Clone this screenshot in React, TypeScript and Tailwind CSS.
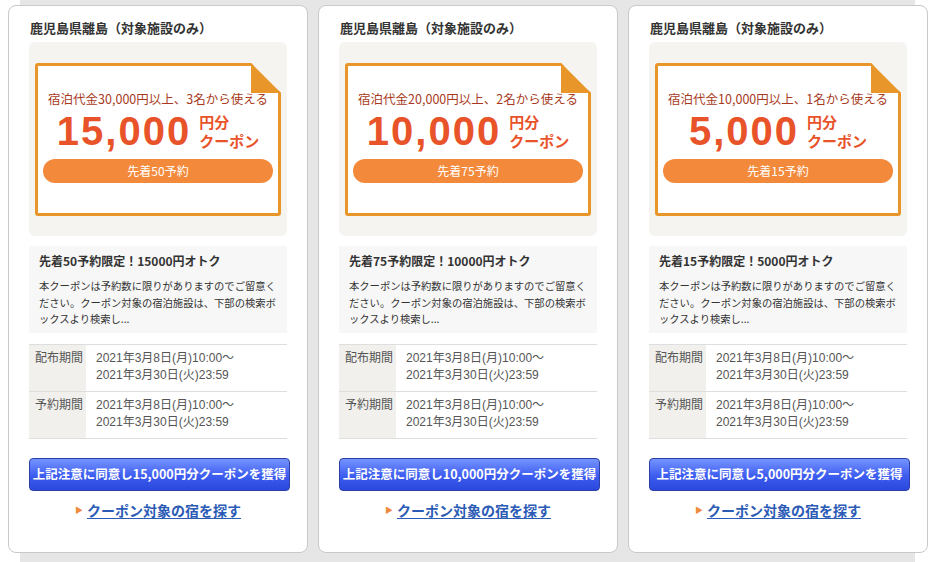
const coupons = [
  { min: "30,000", people: "3", amount: "15,000", first: "50", deal: "15000" },
  { min: "20,000", people: "2", amount: "10,000", first: "75", deal: "10000" },
  { min: "10,000", people: "1", amount: "5,000", first: "15", deal: "5000" },
];

const jp = "font-['Noto_Sans_CJK_JP','Noto_Sans',sans-serif]";

function Period({ label, last }: { label: string; last?: boolean }) {
  return (
    <div className={`flex border-t border-[#dedede] ${last ? "border-b" : ""}`}>
      <div className="w-[57px] shrink-0 bg-[#f1f0ec] pl-[6px] pt-[5px] text-[12px] leading-[17px] text-[#555]">
        {label}
      </div>
      <div className="h-[46px] pl-[10px] pt-[5px] text-[12px] leading-[17px] text-[#555]">
        <div>2021年3月8日(月)10:00〜</div>
        <div>2021年3月30日(火)23:59</div>
      </div>
    </div>
  );
}

function Card({ c }: { c: (typeof coupons)[number] }) {
  return (
    <div className="flex h-[548px] w-[300px] shrink-0 flex-col rounded-lg border border-[#c9c9c9] bg-white px-[20px] pt-[14px]">
      <h3 className="pl-[1px] text-[13px] font-bold leading-[16px] text-[#333]">鹿児島県離島（対象施設のみ）</h3>

      {/* coupon */}
      <div className="mt-[6px] rounded-md bg-[#f5f4f0] px-[6px] pb-[20px] pt-[21px]">
        <div className="relative flex h-[153px] flex-col items-center rounded-[3px] border-[3px] border-[#e8962a] bg-white pt-[25px]">
          <svg className="absolute -right-[3px] -top-[3px]" width="30" height="30" viewBox="0 0 30 30">
            <polygon points="0,0 30,0 30,30" fill="#f5f4f0" />
            <polygon points="0,0 30,30 0,30" fill="#e8962a" />
          </svg>
          <p className="text-[12.5px] leading-[16px] text-[#a8391c]">
            宿泊代金{c.min}円以上、{c.people}名から使える
          </p>
          <div className="mt-[5px] flex items-center text-[#e8532a]">
            <span className="font-['Liberation_Sans',sans-serif] text-[40px] font-bold leading-[36px] tracking-[2px]">
              {c.amount}
            </span>
            <span className="ml-[8px] text-[15px] font-bold leading-[19px]">
              円分
              <br />
              クーポン
            </span>
          </div>
          <div className="mt-[9px] w-[230px] rounded-full bg-[#f38a3b] py-[3px] text-center text-[12px] leading-[18px] text-white">
            先着{c.first}予約
          </div>
        </div>
      </div>

      {/* description */}
      <div className="mt-[10px] h-[87px] bg-[#f7f7f7] px-[10px] pt-[7px]">
        <p className="text-[12px] font-bold leading-[16px] text-[#333]">
          先着{c.first}予約限定！{c.deal}円オトク
        </p>
        <p className="mt-[9px] whitespace-nowrap text-[10.3px] leading-[16.5px] text-[#333]">
          本クーポンは予約数に限りがありますのでご留意く
          <br />
          ださい。クーポン対象の宿泊施設は、下部の検索ボ
          <br />
          ックスより検索し...
        </p>
      </div>

      {/* periods */}
      <div className="mt-[11px] font-['Liberation_Sans','Noto_Sans_CJK_JP',sans-serif]">
        <Period label="配布期間" />
        <Period label="予約期間" last />
      </div>

      <button className="mt-[19px] h-[33px] w-[261px] whitespace-nowrap rounded-[4px] border border-[#2c3fa5] bg-[linear-gradient(#7594ff,#3d5cf0_55%,#2a48dc)] text-[12.5px] font-bold text-white">
        上記注意に同意し{c.amount}円分クーポンを獲得
      </button>

      <a className="mt-[10px] flex items-center justify-center text-[14px] font-bold leading-[18px] text-[#2b5bb5]">
        <span className="mr-[4px] text-[8px] text-[#f08a3c]">▶</span>
        <span className="underline underline-offset-2">クーポン対象の宿を探す</span>
      </a>
    </div>
  );
}

export default function App() {
  return (
    <div
      className={`${jp} h-[562px] w-[936px] overflow-hidden bg-[linear-gradient(to_right,#fff_20px,#e6e6e6_20px,#e6e6e6_915px,#fff_915px)]`}
    >
      <div className="flex gap-[10px] pl-[8px] pt-[5px]">
        {coupons.map((c) => (
          <Card key={c.amount} c={c} />
        ))}
      </div>
    </div>
  );
}
